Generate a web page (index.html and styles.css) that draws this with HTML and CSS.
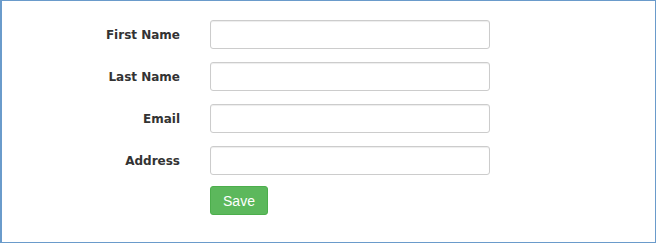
FILE: index.html
```html
<!DOCTYPE html>
<html lang="en">
<head>
    <meta charset="UTF-8">
    <meta name="viewport" content="width=device-width, initial-scale=1.0">
    <title>Contact Form</title>
    <link rel="stylesheet" href="styles.css">
</head>
<body>
    <div class="frame">
        <form class="form-horizontal">
            <label class="control-label" for="firstName">First Name</label>
            <input class="form-control" type="text" id="firstName">

            <label class="control-label" for="lastName">Last Name</label>
            <input class="form-control" type="text" id="lastName">

            <label class="control-label" for="email">Email</label>
            <input class="form-control" type="text" id="email">

            <label class="control-label" for="address">Address</label>
            <input class="form-control" type="text" id="address">

            <div class="actions">
                <button type="button" class="btn btn-success">Save</button>
            </div>
        </form>
    </div>
</body>
</html>
```

FILE: styles.css
```css
/* page */
html, body {
    margin: 0;
    background-color: #ffffff;
}

/* blue outline round the form */
.frame {
    box-sizing: border-box;
    width: 656px;
    height: 243px;
    border: 1px solid #6a9bcb;
    border-left-width: 2px;
    padding-top: 19px;
}

/* label column + input column */
.form-horizontal {
    display: grid;
    grid-template-columns: 178px 280px;
    column-gap: 30px;
    row-gap: 13px;
    align-items: center;
}

.control-label {
    text-align: right;
    font-family: "DejaVu Sans", sans-serif;
    font-weight: bold;
    font-size: 12px;
    color: #333333;
}

.form-control {
    box-sizing: border-box;
    height: 29px;
    margin: 0;
    padding: 5px 10px;
    border: 1px solid #cccccc;
    border-radius: 3px;
    box-shadow: inset 0 1px 1px rgba(0, 0, 0, 0.075);
    background-color: #ffffff;
    font-family: "Liberation Sans", sans-serif;
    font-size: 12px;
}

.actions {
    grid-column: 2;
    margin-top: -2px;
}

/* green save button */
.btn {
    box-sizing: border-box;
    height: 29px;
    width: 58px;
    padding: 0;
    border: 1px solid #4cae4c;
    border-radius: 3px;
    background-color: #5cb85c;
    color: #ffffff;
    font-family: "Liberation Sans", Arial, sans-serif;
    font-size: 14px;
    cursor: pointer;
}
```
